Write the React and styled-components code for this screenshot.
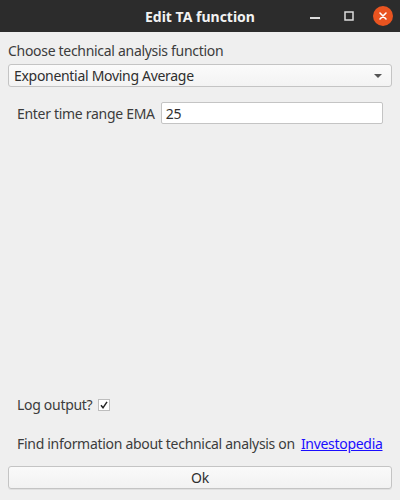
import styled, { createGlobalStyle } from "styled-components";

const Global = createGlobalStyle`
  html, body { margin: 0; padding: 0; }
  body {
    font-family: "Noto Sans", "DejaVu Sans", sans-serif;
    font-size: 14px;
    letter-spacing: -0.3px;
    color: #3c3c3c;
    background: #efefef;
  }
`;

const Window = styled.div`
  width: 400px;
  height: 500px;
  display: flex;
  flex-direction: column;
  background: #efefef;
  overflow: hidden;
`;

const TitleBar = styled.div`
  height: 32px;
  flex: none;
  background: #2c2c2c;
  position: relative;
  display: flex;
  align-items: center;
  justify-content: center;
`;

const Title = styled.span`
  color: #f2f2f2;
  font-weight: 700;
  font-size: 14px;
  letter-spacing: 0;
`;

const Controls = styled.div`
  position: absolute;
  right: 7px;
  top: 6px;
  display: flex;
  align-items: center;
  gap: 14px;
`;

const Ctrl = styled.div`
  width: 20px;
  height: 20px;
  display: flex;
  align-items: center;
  justify-content: center;
  border-radius: 50%;
  background: ${({ $bg }) => $bg || "transparent"};
`;

const Body = styled.div`
  flex: 1;
  display: flex;
  flex-direction: column;
  padding: 9px 8px 11px 8px;
`;

const Label = styled.div`
  height: 20px;
  line-height: 20px;
  white-space: nowrap;
`;

const Combo = styled.div`
  margin-top: 3px;
  height: 23px;
  box-sizing: border-box;
  border: 1px solid #c4c4c4;
  border-radius: 3px;
  background: linear-gradient(#fbfbfb, #f3f3f3);
  display: flex;
  align-items: center;
  justify-content: space-between;
  padding: 0 9px 0 5px;
  color: #2f2f2f;
`;

const Arrow = styled.div`
  width: 0;
  height: 0;
  border-left: 4px solid transparent;
  border-right: 4px solid transparent;
  border-top: 4px solid #555;
`;

const Group = styled.div`
  flex: 1;
  display: flex;
  flex-direction: column;
  padding: 15px 9px 0 9px;
`;

const Row = styled.div`
  display: flex;
  align-items: center;
  gap: ${({ $gap }) => $gap || "6px"};
  margin-top: ${({ $top }) => $top || "0"};
  white-space: nowrap;
`;

const Input = styled.div`
  flex: 1;
  height: 22px;
  box-sizing: border-box;
  border: 1px solid #c4c4c4;
  border-radius: 2px;
  background: #fff;
  display: flex;
  align-items: center;
  padding-left: 4px;
  color: #2f2f2f;
`;

const Spacer = styled.div`
  flex: 1;
`;

const Check = styled.div`
  width: 12px;
  height: 12px;
  box-sizing: border-box;
  border: 1px solid #bdbdbd;
  background: #fff;
  display: flex;
  align-items: center;
  justify-content: center;
`;

const Link = styled.a`
  color: #1a0dff;
  text-decoration: underline;
`;

const Button = styled.div`
  margin-top: 13px;
  height: 23px;
  box-sizing: border-box;
  border: 1px solid #c4c4c4;
  border-radius: 3px;
  background: linear-gradient(#fafafa, #f2f2f2);
  box-shadow: 0 1px 0 rgba(0, 0, 0, 0.06);
  display: flex;
  align-items: center;
  justify-content: center;
  color: #2f2f2f;
`;

export default function App() {
  return (
    <Window>
      <Global />
      <TitleBar>
        <Title>Edit TA function</Title>
        <Controls>
          <Ctrl>
            <svg width="12" height="12" viewBox="0 0 12 12">
              <rect x="1" y="7" width="10" height="2" fill="#dcdcdc" />
            </svg>
          </Ctrl>
          <Ctrl>
            <svg width="12" height="12" viewBox="0 0 12 12">
              <rect x="2" y="2" width="8" height="8" fill="none" stroke="#dcdcdc" strokeWidth="1.5" />
            </svg>
          </Ctrl>
          <Ctrl $bg="#e95420">
            <svg width="10" height="10" viewBox="0 0 10 10">
              <path d="M2 2L8 8M8 2L2 8" stroke="#fff" strokeWidth="1.6" strokeLinecap="round" />
            </svg>
          </Ctrl>
        </Controls>
      </TitleBar>
      <Body>
        <Label>Choose technical analysis function</Label>
        <Combo>
          <span>Exponential Moving Average</span>
          <Arrow />
        </Combo>
        <Group>
          <Row $gap="6px">
            <span>Enter time range EMA</span>
            <Input>25</Input>
          </Row>
          <Spacer />
          <Row $gap="6px">
            <span>Log output?</span>
            <Check>
              <svg width="10" height="10" viewBox="0 0 10 10">
                <path d="M2 5.2L4 7.8L8 1.8" fill="none" stroke="#222" strokeWidth="1.5" />
              </svg>
            </Check>
          </Row>
          <Row $gap="6px" $top="20px">
            <span>Find information about technical analysis on</span>
            <Link href="#">Investopedia</Link>
          </Row>
        </Group>
        <Button>Ok</Button>
      </Body>
    </Window>
  );
}
